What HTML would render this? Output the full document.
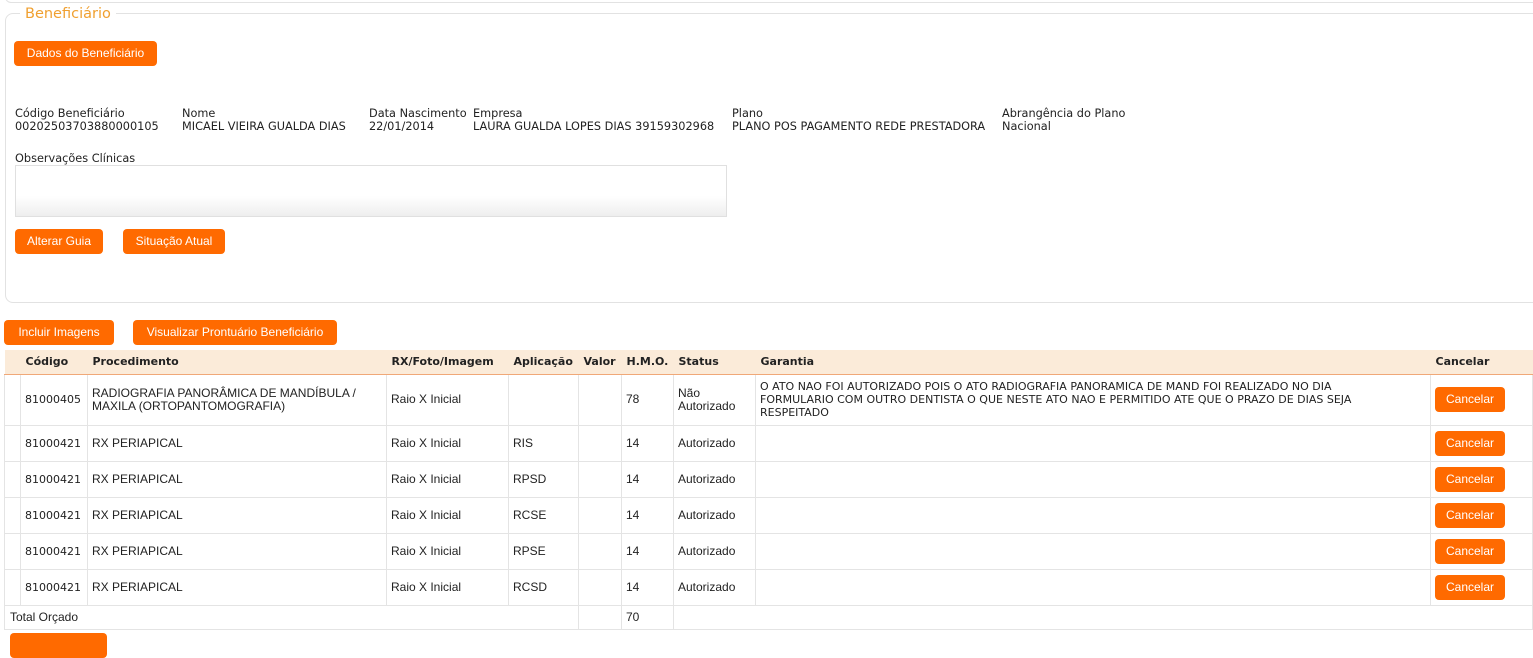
<!DOCTYPE html>
<html><head><meta charset="utf-8"><style>
*{margin:0;padding:0;box-sizing:border-box}
body{width:1533px;height:636px;overflow:hidden;background:#fff;font-family:"DejaVu Sans","Liberation Sans",sans-serif;font-size:11.3px;color:#222;position:relative}
.a{position:absolute;white-space:nowrap}
.btn{position:absolute;background:#ff6a00;color:#fff;border-radius:4px;font-family:"Liberation Sans",sans-serif;font-size:12px;text-align:center;height:25px;line-height:25px}
.fs{position:absolute;left:5px;top:13px;width:1540px;height:290px;border:1px solid #e2e2e2;border-radius:8px}
.lbl{font-size:11.3px;line-height:13px}
table{position:absolute;left:4px;top:350px;width:1529px;border-collapse:collapse;font-size:11px}
th{background:#fbebd9;height:24px;text-align:left;padding-left:5px;font-weight:bold;border-bottom:1px solid #f0a878;color:#222}
td{border:1px solid #e4e4e4;padding-left:4px;vertical-align:middle;line-height:13px}
td.c{font-family:"Liberation Sans",sans-serif;font-size:12px}
.cb{display:inline-block;background:#ff6a00;color:#fff;border-radius:4px;width:70px;height:25px;line-height:25px;text-align:center;font-family:"Liberation Sans",sans-serif;font-size:12px}
</style></head><body>
<div class="a" style="left:5px;top:-10px;width:1540px;height:13px;border:1px solid #e2e2e2;border-radius:6px"></div>
<div class="fs"></div>
<div class="a" style="left:20px;top:5px;background:#fff;padding:0 5px;color:#f0a030;font-size:14.5px;line-height:18px">Beneficiário</div>
<div class="btn" style="left:14px;top:41px;width:143px">Dados do Beneficiário</div>
<div class="a lbl" style="left:15px;top:107px">Código Beneficiário<br>00202503703880000105</div>
<div class="a lbl" style="left:182px;top:107px">Nome<br>MICAEL VIEIRA GUALDA DIAS</div>
<div class="a lbl" style="left:369px;top:107px">Data Nascimento<br>22/01/2014</div>
<div class="a lbl" style="left:473px;top:107px">Empresa<br>LAURA GUALDA LOPES DIAS 39159302968</div>
<div class="a lbl" style="left:732px;top:107px">Plano<br>PLANO POS PAGAMENTO REDE PRESTADORA</div>
<div class="a lbl" style="left:1002px;top:107px">Abrangência do Plano<br>Nacional</div>
<div class="a lbl" style="left:15px;top:152px">Observações Clínicas</div>
<div class="a" style="left:15px;top:165px;width:712px;height:52px;border:1px solid #e0e0e0;background:linear-gradient(#fff 60%,#eee)"></div>
<div class="btn" style="left:15px;top:229px;width:88px">Alterar Guia</div>
<div class="btn" style="left:123px;top:229px;width:102px">Situação Atual</div>
<div class="btn" style="left:4px;top:320px;width:110px">Incluir Imagens</div>
<div class="btn" style="left:133px;top:320px;width:204px">Visualizar Prontuário Beneficiário</div>
<table>
<tr><th style="width:16px"></th><th style="width:67px">Código</th><th style="width:299px">Procedimento</th><th style="width:122px">RX/Foto/Imagem</th><th style="width:70px">Aplicação</th><th style="width:43px">Valor</th><th style="width:52px">H.M.O.</th><th style="width:82px">Status</th><th style="width:675px">Garantia</th><th>Cancelar</th></tr>
<tr style="height:51px"><td></td><td>81000405</td><td class="c">RADIOGRAFIA PANORÂMICA DE MANDÍBULA /<br>MAXILA (ORTOPANTOMOGRAFIA)</td><td class="c">Raio X Inicial</td><td></td><td></td><td class="c">78</td><td class="c">Não<br>Autorizado</td><td>O ATO NAO FOI AUTORIZADO POIS O ATO RADIOGRAFIA PANORAMICA DE MAND FOI REALIZADO NO DIA<br>FORMULARIO COM OUTRO DENTISTA O QUE NESTE ATO NAO E PERMITIDO ATE QUE O PRAZO DE DIAS SEJA<br>RESPEITADO</td><td><span class="cb">Cancelar</span></td></tr>
<tr style="height:36px"><td></td><td>81000421</td><td class="c">RX PERIAPICAL</td><td class="c">Raio X Inicial</td><td class="c">RIS</td><td></td><td class="c">14</td><td class="c">Autorizado</td><td></td><td><span class="cb">Cancelar</span></td></tr>
<tr style="height:36px"><td></td><td>81000421</td><td class="c">RX PERIAPICAL</td><td class="c">Raio X Inicial</td><td class="c">RPSD</td><td></td><td class="c">14</td><td class="c">Autorizado</td><td></td><td><span class="cb">Cancelar</span></td></tr>
<tr style="height:36px"><td></td><td>81000421</td><td class="c">RX PERIAPICAL</td><td class="c">Raio X Inicial</td><td class="c">RCSE</td><td></td><td class="c">14</td><td class="c">Autorizado</td><td></td><td><span class="cb">Cancelar</span></td></tr>
<tr style="height:36px"><td></td><td>81000421</td><td class="c">RX PERIAPICAL</td><td class="c">Raio X Inicial</td><td class="c">RPSE</td><td></td><td class="c">14</td><td class="c">Autorizado</td><td></td><td><span class="cb">Cancelar</span></td></tr>
<tr style="height:36px"><td></td><td>81000421</td><td class="c">RX PERIAPICAL</td><td class="c">Raio X Inicial</td><td class="c">RCSD</td><td></td><td class="c">14</td><td class="c">Autorizado</td><td></td><td><span class="cb">Cancelar</span></td></tr>
<tr style="height:24px"><td colspan="5" class="c" style="padding-left:5px">Total Orçado</td><td></td><td class="c">70</td><td colspan="3"></td></tr>
</table>
<div class="btn" style="left:10px;top:633px;width:97px"></div>
</body></html>
